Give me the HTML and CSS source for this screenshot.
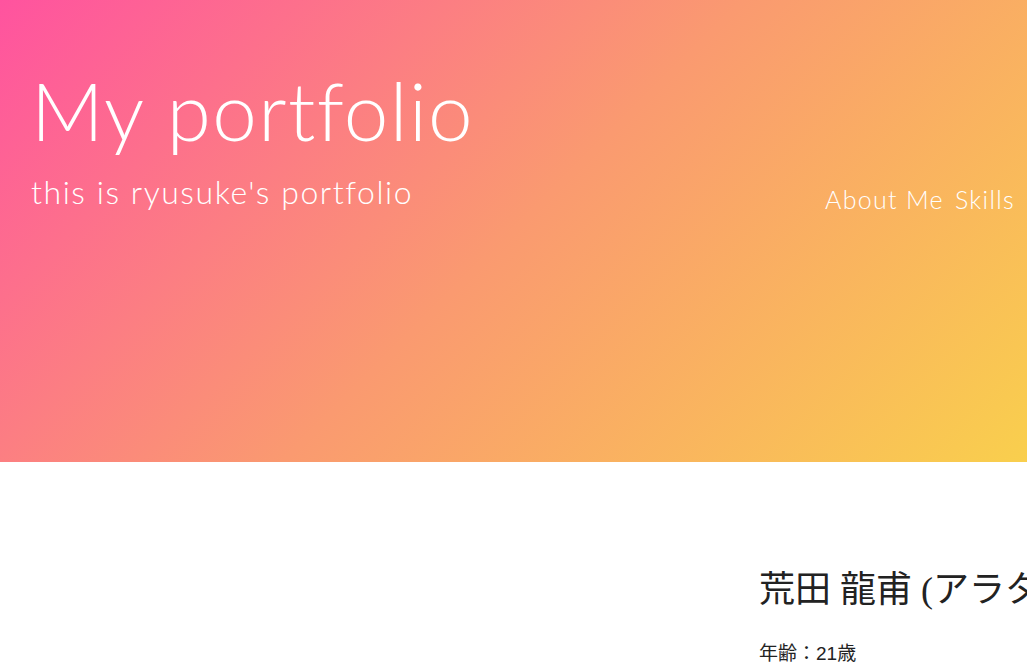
FILE: index.html
```html
<!DOCTYPE html>
<html lang="ja">
<head>
<meta charset="utf-8">
<title>My portfolio</title>
<link rel="stylesheet" href="styles.css">
</head>
<body>
<header class="hero">
  <div class="hero-bar">
    <div class="brand">
      <h1 class="brand-title">My portfolio</h1>
      <p class="brand-sub">this is ryusuke's portfolio</p>
    </div>
    <nav class="nav">
      <a class="nav-link" href="#about">About Me</a>
      <a class="nav-link" href="#skills">Skills</a>
    </nav>
  </div>
</header>
<main class="about" id="about">
  <div class="about-photo"></div>
  <div class="about-profile">
    <h2 class="about-name">荒田 龍甫 (アラタ リュウスケ)</h2>
    <p class="about-row">年齢：21歳</p>
  </div>
</main>
</body>
</html>
```
FILE: styles.css
```css
html {
  overflow-x: hidden;
}
body {
  margin: 0;
  font-family: "Lato", "Liberation Sans", sans-serif;
  color: #222;
  overflow-x: hidden;
}
.hero {
  height: 462px;
  background: linear-gradient(135deg, #ff539f 0%, #fa9a70 50%, #f9cf4d 100%);
  color: #fff;
  box-sizing: border-box;
  padding: 64px 12px 0 31px;
}
.hero-bar {
  display: flex;
  justify-content: space-between;
  align-items: flex-end;
}
.brand-title {
  margin: 0;
  font-size: 80px;
  font-weight: 300;
  line-height: 1.15;
  letter-spacing: 1.4px;
}
.brand-sub {
  margin: 17px 0 0;
  font-size: 32px;
  font-weight: 300;
  line-height: 1.2;
  letter-spacing: 1.55px;
}
.nav {
  display: flex;
  gap: 11px;
  margin-bottom: -3px;
}
.nav-link {
  color: #fff;
  text-decoration: none;
  font-size: 25px;
  font-weight: 300;
  letter-spacing: 1.3px;
}
.about {
  display: flex;
  padding: 103px 0 0 0;
}
.about-photo {
  width: 759px;
  flex-shrink: 0;
}
.about-profile {
  white-space: nowrap;
}
.about-name {
  margin: 0;
  font-family: "Liberation Serif", "Noto Sans CJK JP", serif;
  font-weight: 400;
  font-size: 36px;
  line-height: 1.4;
}
.about-row {
  margin: 23px 0 0;
  font-family: "Liberation Sans", "Noto Sans CJK JP", sans-serif;
  font-size: 19px;
}
```
